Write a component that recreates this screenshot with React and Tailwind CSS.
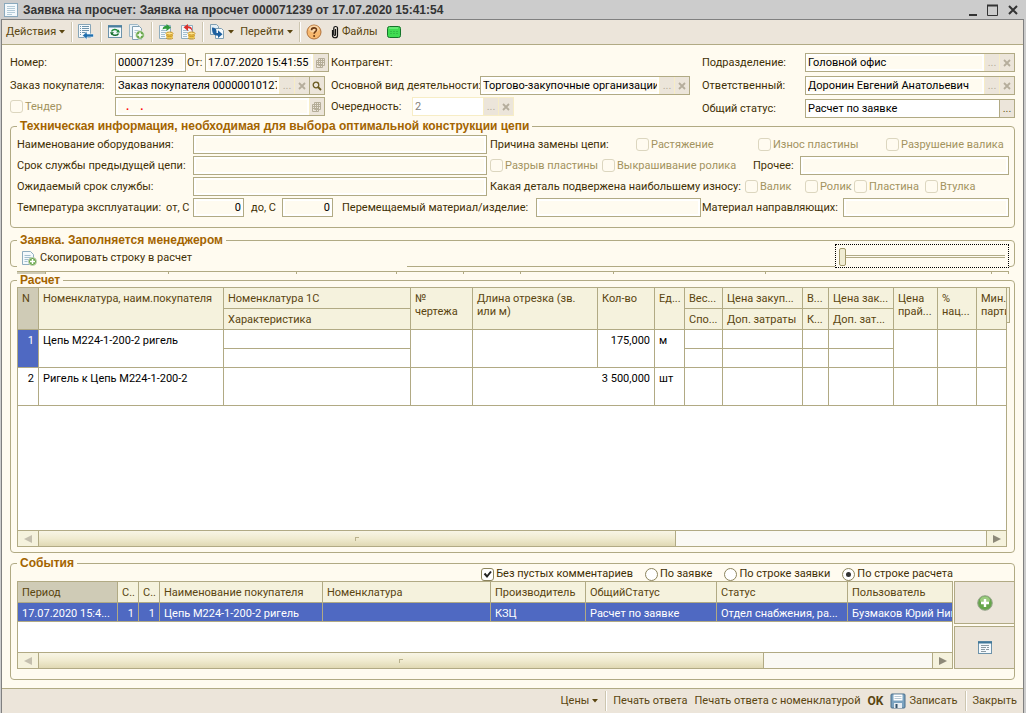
import { useState } from 'react';
import clsx from 'clsx';

// ── icons ──

function Sheet({ className = 'size-4' }) {
  return (
    <svg className={className} viewBox="0 0 16 16" fill="none">
      <rect x="1.5" y="1.5" width="13" height="13" fill="#f4f9fc" stroke="#8aa9bd" />
      <path d="M4 4.5h8M4 6.5h8M4 8.5h8M4 10.5h8M4 12.5h5" stroke="#b4cbd8" />
    </svg>
  );
}

function ListBackIcon() {
  return (
    <svg className="size-4" viewBox="0 0 16 16" fill="none">
      <path d="M.5.5h12v13H.5z" fill="#f4f9fc" stroke="#86a5b8" />
      <path d="M2 2.500h1M4 2.500h7M2 4.500h1M4 4.500h7M2 6.500h1M4 6.500h7M2 8.500h1M4 8.500h4M2 10.500h1" stroke="#6d93ab" />
      <path d="M4.500 11.500L9 7.500v2.500h6.500v3H9v2.500z" fill="#1f6fae" stroke="#f4f9fc" strokeWidth=".6" />
    </svg>
  );
}

function RefreshIcon() {
  return (
    <svg className="size-4" viewBox="0 0 16 16" fill="none">
      <rect x="1.500" y="1.500" width="13" height="12" fill="#f4f9fc" stroke="#6d93ab" />
      <path d="M1 2.500h14" stroke="#4a7f9f" strokeWidth="2" />
      <path d="M4.500 7.500c1-2.500 5-2.800 6.300-.6" stroke="#1f8a3a" strokeWidth="1.500" />
      <path d="M9 8.500h4l-1.500-3z" fill="#1f8a3a" />
      <path d="M11.500 9.500c-1 2.300-5 2.500-6.300.3" stroke="#146c2c" strokeWidth="1.500" />
      <path d="M7 8.300H3l1.500 3z" fill="#146c2c" />
    </svg>
  );
}

function CopyAddIcon() {
  return (
    <svg className="size-4" viewBox="0 0 16 16" fill="none">
      <path d="M.5.5h8l2 2v10H.5z" fill="#e8f1f6" stroke="#9db8c7" />
      <path d="M3.500 2.500h7l2 2v11h-9z" fill="#f8fbfd" stroke="#7f9fb2" />
      <path d="M5.500 6.500h5M5.500 8.500h3" stroke="#b4cbd8" />
      <circle cx="11" cy="11" r="4.300" fill="#6aa84a" stroke="#dfe8d8" />
      <path d="M11 8.500v5M8.500 11h5" stroke="#fff" strokeWidth="1.600" />
    </svg>
  );
}

function SheetAddIcon() {
  return (
    <svg className="size-4" viewBox="0 0 16 16" fill="none">
      <path d="M1.500 1.500h8l3 3v10h-11z" fill="#f4f9fc" stroke="#8fadbf" />
      <path d="M3.500 5.500h6M3.500 7.500h7M3.500 9.500h4M3.500 11.500h3" stroke="#a4bfce" />
      <circle cx="11.500" cy="11.500" r="4" fill="#6aa84a" stroke="#c5d3bb" />
      <path d="M11.500 9v5M9 11.500h5" stroke="#fff" strokeWidth="1.500" />
    </svg>
  );
}

function PostIcon({ undo }) {
  return (
    <svg className="size-4" viewBox="0 0 16 16" fill="none">
      <path d="M1.500 1.500h11v13h-11z" fill="#f4f9fc" stroke="#8fadbf" />
      <path d="M3 6.500h6M3 8.500h5M3 10.500h4M3 12.500h4" stroke="#a4bfce" />
      {undo ? (
        <path d="M12 8.500c0-3-1.500-4-4-4.200V7L3.500 3.300 8 0v2.300c3 0 5 2 4 6.200z" fill="#d9302c" />
      ) : (
        <path d="M4.500 5.500C5 2.500 6.500 1.800 8.500 1.800V0L13 3.500 8.500 7V4.800C7 4.500 5.500 4.500 4.500 5.500z" fill="#2e9a3c" />
      )}
      <path d="M8.500 9.500h6v5h-6z" fill="#f0c94a" />
      <ellipse cx="11.500" cy="9.500" rx="3.500" ry="1.500" fill="#ffe58a" stroke="#c9952a" />
      <path d="M8 11.500c1 1.300 6 1.300 7 0M8 14c1 1.500 6 1.500 7 0" stroke="#c9952a" />
    </svg>
  );
}

function BasedOnIcon() {
  return (
    <svg className="size-4" viewBox="0 0 16 16" fill="none">
      <path d="M1.500.5h6l2 2v8h-8z" fill="#e4eff5" stroke="#7f9fb2" />
      <path d="M6.500 4.500h6l2 2v8h-8z" fill="#f4f9fc" stroke="#7f9fb2" />
      <path d="M3 3.500c3 0 4.500 1.500 4.500 4V9H9V6.300l4.500 4L9 14v-2.300C4.500 11.500 3 9.500 3 3.500z" fill="#1c5f9e" />
    </svg>
  );
}

function HelpIcon() {
  return (
    <svg className="size-4" viewBox="0 0 16 16" fill="none">
      <circle cx="8" cy="8" r="7" fill="#f7b86e" stroke="#b0713a" />
      <ellipse cx="8" cy="5" rx="5" ry="3.500" fill="#fbd6a6" />
      <path d="M5.500 6.300C5.500 3 10.700 3.200 10.500 6c-.1 1.500-2.300 1.800-2.400 3.700" stroke="#6b3a14" strokeWidth="1.600" />
      <circle cx="8.100" cy="12" r="1" fill="#6b3a14" />
    </svg>
  );
}

function ClipIcon() {
  return (
    <svg className="h-4 w-2" viewBox="0 0 8 16" fill="none">
      <path d="M4.500 5v5.500c0 1.200-1.700 1.200-1.700 0V4C2.800 2 6.500 2 6.500 4v7.500c0 3-5 3-5 0V6" stroke="#111" strokeWidth="1.200" />
    </svg>
  );
}

function GreenIcon() {
  return (
    <svg className="h-3 w-3.5" viewBox="0 0 14 12" fill="none">
      <rect x=".5" y=".5" width="13" height="11" rx="2" fill="#3fdc52" stroke="#15742a" />
      <path d="M2 2h9" stroke="#8df598" />
      <path d="M3 5.500h8M3 7.500h8" stroke="#31bd45" strokeDasharray="2 1" />
    </svg>
  );
}

function PlusCircleIcon() {
  return (
    <svg className="size-4" viewBox="0 0 16 16" fill="none">
      <circle cx="8" cy="8" r="7.300" fill="#67a64c" stroke="#9aa590" />
      <ellipse cx="8" cy="5" rx="5" ry="3.500" fill="#9ccb80" />
      <path d="M8 4v8M4 8h8" stroke="#fff" strokeWidth="2.400" />
    </svg>
  );
}

function FormIcon() {
  return (
    <svg className="size-4" viewBox="0 0 16 16" fill="none">
      <rect x="1.500" y="1.500" width="13" height="12" fill="#f4f9fc" stroke="#6d93ab" />
      <path d="M1 2.500h14" stroke="#3f7799" strokeWidth="2" />
      <path d="M4 5.500h8M4 7.500h5M10 7.500h2M4 9.500h4M9 9.500h3M4 11.500h5" stroke="#8b9aa3" />
    </svg>
  );
}

function DiskIcon() {
  return (
    <svg className="size-4" viewBox="0 0 16 16" fill="none">
      <rect x="1" y="1" width="14" height="14" rx="1" fill="#7ba3c0" stroke="#4b6f8b" />
      <path d="M3.500 1.500h9v6h-9z" fill="#fff" />
      <path d="M4.500 3.500h7M4.500 5.500h7" stroke="#b7c8d4" />
      <path d="M4 10h8v5H4z" fill="#e6edf2" />
      <path d="M5.500 11h2v4h-2z" fill="#34526a" />
    </svg>
  );
}

function CalendarIcon() {
  return (
    <svg className="size-2.5" viewBox="0 0 10 10" fill="none">
      <path d="M2.500.5h6v7h-6zM.5 2.500h8M.5 4.500h8M.5 6.500h6M4.500.5v9M6.500.5v9M.5 2.500v7h6" stroke="#b5ad98" />
    </svg>
  );
}

function SearchIcon() {
  return (
    <svg className="size-2.5" viewBox="0 0 10 10" fill="none">
      <circle cx="4" cy="4" r="2.800" stroke="#6b5a20" strokeWidth="1.300" />
      <path d="M6 6l3 3" stroke="#6b5a20" strokeWidth="1.800" />
    </svg>
  );
}

function CrossIcon() {
  return (
    <svg className="size-2" viewBox="0 0 8 8" fill="none">
      <path d="M1 1l6 6M7 1L1 7" stroke="currentColor" strokeWidth="1.800" />
    </svg>
  );
}

function Caret() {
  return (
    <svg className="h-1 w-1.5" viewBox="0 0 6 4">
      <path d="M0 0h6L3 3.500z" fill="#5a4510" />
    </svg>
  );
}

// ── controls ──

const ADDONS = {
  dots: { label: 'Выбрать', icon: <span className="leading-3">...</span> },
  clear: { label: 'Очистить', icon: <CrossIcon /> },
  date: { label: 'Календарь', icon: <CalendarIcon /> },
  find: { label: 'Открыть', icon: <SearchIcon /> },
};

function Field({ id, label, value = '', addons = [], className, tone = 'plain', align }) {
  return (
    <div
      className={clsx(
        'flex h-[19px] shrink-0 border',
        tone === 'pale' ? 'border-[#f7edc6]' : 'border-[#b1aa84]',
        className,
      )}
    >
      <input
        id={id}
        aria-label={label}
        defaultValue={value}
        className={clsx(
          'min-w-0 flex-1 outline-none',
          tone === 'red' ? 'pl-2.5' : 'px-0.5',
          tone === 'plain' && 'bg-[#fffbf0] text-black shadow-[inset_0_0_0_2px_#fff]',
          tone === 'white' && 'bg-white text-black',
          tone === 'pale' && 'bg-white text-[#85817a]',
          tone === 'red' && 'bg-[#fffbf0] font-bold text-[#ff0000] shadow-[inset_0_0_0_2px_#fff]',
          align === 'right' && 'text-right',
        )}
      />
      {addons.map((a) => (
        <button
          key={a}
          type="button"
          aria-label={ADDONS[a].label}
          className={clsx(
            'flex w-[15px] shrink-0 items-center justify-center border-l bg-[#ece5da]',
            a === 'find' || tone === 'white'
              ? 'border-[#b1aa84] text-[#6b5a20]'
              : 'border-[#f7edc6] text-[#b5ad9c]',
          )}
        >
          {ADDONS[a].icon}
        </button>
      ))}
    </div>
  );
}

function Check({ label, className, checked = false }) {
  return (
    <label
      className={clsx(
        'flex shrink-0 items-center gap-0.5 whitespace-nowrap',
        checked ? 'text-[#3f3005]' : 'text-[#a3935f]',
        className,
      )}
    >
      <span className="relative flex size-[13px] shrink-0">
        <input
          type="checkbox"
          defaultChecked={checked}
          className={clsx(
            'peer size-[13px] appearance-none rounded-[3px] border',
            checked ? 'border-[#8c845c] bg-white' : 'border-[#dcd6bf] bg-[#fffbf0]',
          )}
        />
        <svg
          className="pointer-events-none absolute inset-0 hidden size-[13px] peer-checked:block"
          viewBox="0 0 13 13"
          fill="none"
        >
          <path d="M3.500 5.500l2.500 3 4-5" stroke="#222" strokeWidth="2" />
        </svg>
      </span>
      {label}
    </label>
  );
}

function Radio({ label, value, current, onChange }) {
  return (
    <label className="flex items-center gap-0.5 whitespace-nowrap text-[#3f3005]">
      <span className="relative flex size-[13px]">
        <input
          type="radio"
          name="scope"
          value={value}
          checked={current === value}
          onChange={() => onChange(value)}
          className="peer size-[13px] appearance-none rounded-full border border-[#8c845c] bg-white"
        />
        <span className="pointer-events-none absolute inset-1 hidden rounded-full bg-[#333] peer-checked:block" />
      </span>
      {label}
    </label>
  );
}

function Group({ title, className, children }) {
  return (
    <fieldset className={clsx('min-w-0 rounded border border-[#b1aa84] pl-1.5', className)}>
      <legend className="px-[3px] font-['Liberation_Sans',sans-serif] text-[12px] leading-3 font-bold text-[#a36400]">
        {title}
      </legend>
      {children}
    </fieldset>
  );
}

function ToolButton({ icon, label, menu, bold, className }) {
  return (
    <button
      type="button"
      aria-label={label ? undefined : 'Команда'}
      className={clsx(
        'flex h-5 shrink-0 items-center gap-[3px] whitespace-nowrap',
        bold && 'text-[12px] font-bold',
        className,
      )}
    >
      {icon}
      {label}
      {menu && <Caret />}
    </button>
  );
}

function Separator() {
  return <span className="h-5 w-px shrink-0 bg-[#cdc6b0] shadow-[1px_0_0_#fff]" />;
}

function ScrollBar({ thumb }) {
  const button = 'flex w-5 shrink-0 items-center justify-center bg-[#f5f2dd]';
  return (
    <div className="flex h-4 shrink-0 border-t border-[#b1aa84] bg-[#faf9f4]">
      <button type="button" aria-label="Влево" className={button}>
        <svg className="size-2" viewBox="0 0 8 8">
          <path d="M8 0v8L0 4z" fill="#c4bfae" />
        </svg>
      </button>
      <div className="flex flex-1">
        <div
          className="flex items-center justify-center border-x border-[#b1aa84] bg-linear-to-b from-[#f8f5e6] via-[#f0ebd0] to-[#e0d9b4]"
          style={{ width: thumb }}
        >
          <span className="size-1 border-t border-l border-[#b9b18c]" />
        </div>
      </div>
      <button type="button" aria-label="Вправо" className={clsx(button, 'border-l border-[#b1aa84]')}>
        <svg className="size-2" viewBox="0 0 8 8">
          <path d="M0 0v8l8-4z" fill="#8d8978" />
        </svg>
      </button>
    </div>
  );
}

// ── tables ──

const TH = 'border-r border-b border-[#b1aa84] px-1 pt-1 text-left align-top font-normal text-[#5a4510] overflow-hidden whitespace-nowrap';
const TD = 'border-r border-b border-[#b1aa84] px-1 align-top overflow-hidden whitespace-nowrap';

function CalcTable() {
  return (
    <table className="w-full table-fixed border-separate border-spacing-0 leading-[13px]">
      <colgroup>
        <col className="w-[21px]" />
        <col />
        <col className="w-[187px]" />
        <col className="w-[62px]" />
        <col className="w-[125px]" />
        <col className="w-[57px]" />
        <col className="w-[30px]" />
        <col className="w-[38px]" />
        <col className="w-[80px]" />
        <col className="w-[26px]" />
        <col className="w-[65px]" />
        <col className="w-[44px]" />
        <col className="w-[39px]" />
        <col className="w-[29px]" />
      </colgroup>
      <thead className="bg-[#f5f2dd]">
        <tr className="h-[21px]">
          <th rowSpan={2} className={clsx(TH, 'bg-[#cfcbb6]')}>N</th>
          <th rowSpan={2} className={TH}>Номенклатура, наим.покупателя</th>
          <th className={TH}>Номенклатура 1С</th>
          <th rowSpan={2} className={TH}>№<br />чертежа</th>
          <th rowSpan={2} className={TH}>Длина отрезка (зв.<br />или м)</th>
          <th rowSpan={2} className={TH}>Кол-во</th>
          <th rowSpan={2} className={TH}>Ед...</th>
          <th className={TH}>Вес...</th>
          <th className={TH}>Цена закуп...</th>
          <th className={TH}>В...</th>
          <th className={TH}>Цена зак...</th>
          <th rowSpan={2} className={TH}>Цена<br />прай...</th>
          <th rowSpan={2} className={TH}>%<br />нац...</th>
          <th rowSpan={2} className={clsx(TH, 'border-r-0 pr-0')}>Мин.<br />парти</th>
        </tr>
        <tr className="h-[21px]">
          <th className={TH}>Характеристика</th>
          <th className={TH}>Спо...</th>
          <th className={TH}>Доп. затраты</th>
          <th className={TH}>К...</th>
          <th className={TH}>Доп. зат...</th>
        </tr>
      </thead>
      <tbody className="text-black">
        <tr className="h-[19px]">
          <td rowSpan={2} className={clsx(TD, 'bg-[#4f69c2] pt-1 text-right text-white')}>1</td>
          <td rowSpan={2} className={clsx(TD, 'pt-1')}>Цепь М224-1-200-2 ригель</td>
          <td className={TD} />
          <td rowSpan={2} className={TD} />
          <td rowSpan={2} className={TD} />
          <td rowSpan={2} className={clsx(TD, 'pt-1 text-right')}>175,000</td>
          <td rowSpan={2} className={clsx(TD, 'pt-1')}>м</td>
          <td className={TD} />
          <td className={TD} />
          <td className={TD} />
          <td className={TD} />
          <td rowSpan={2} className={TD} />
          <td rowSpan={2} className={TD} />
          <td rowSpan={2} className={clsx(TD, 'border-r-0')} />
        </tr>
        <tr className="h-[19px]">
          <td className={TD} />
          <td className={TD} />
          <td className={TD} />
          <td className={TD} />
          <td className={TD} />
        </tr>
        <tr className="h-[38px]">
          <td className={clsx(TD, 'pt-1 text-right')}>2</td>
          <td className={clsx(TD, 'pt-1')}>Ригель к Цепь М224-1-200-2</td>
          <td className={TD} />
          <td className={TD} />
          <td colSpan={2} className={clsx(TD, 'pt-1 text-right')}>3 500,000</td>
          <td className={clsx(TD, 'pt-1')}>шт</td>
          <td className={TD} />
          <td className={TD} />
          <td className={TD} />
          <td className={TD} />
          <td className={TD} />
          <td className={TD} />
          <td className={clsx(TD, 'border-r-0')} />
        </tr>
      </tbody>
    </table>
  );
}

const EVENT_COLUMNS = [
  { title: 'Период', value: '17.07.2020 15:4...', width: 'w-[100px]' },
  { title: 'С..', value: '1', width: 'w-[21px]', right: true },
  { title: 'С..', value: '1', width: 'w-[21px]', right: true },
  { title: 'Наименование покупателя', value: 'Цепь М224-1-200-2 ригель', width: 'w-[163px]' },
  { title: 'Номенклатура', value: '', width: '' },
  { title: 'Производитель', value: 'КЗЦ', width: 'w-[95px]' },
  { title: 'ОбщийСтатус', value: 'Расчет по заявке', width: 'w-[131px]' },
  { title: 'Статус', value: 'Отдел снабжения, ра...', width: 'w-[131px]' },
  { title: 'Пользователь', value: 'Бузмаков Юрий Ник', width: 'w-[104px]' },
];

function EventsTable() {
  return (
    <table className="w-full table-fixed border-separate border-spacing-0 leading-[13px]">
      <colgroup>
        {EVENT_COLUMNS.map((c, i) => (
          <col key={i} className={c.width} />
        ))}
      </colgroup>
      <thead className="bg-[#f5f2dd]">
        <tr className="h-[21px]">
          {EVENT_COLUMNS.map((c, i) => (
            <th key={i} className={clsx(TH, 'last:border-r-0', i === 0 && 'bg-[#cfcbb6]')}>
              {c.title}
            </th>
          ))}
        </tr>
      </thead>
      <tbody>
        <tr className="h-[19px] bg-[#4f69c2] text-white">
          {EVENT_COLUMNS.map((c, i) => (
            <td key={i} className={clsx(TD, 'pt-1 last:border-r-0 last:pr-0', c.right && 'text-right')}>
              {c.value}
            </td>
          ))}
        </tr>
      </tbody>
    </table>
  );
}

// ── page ──

export default function App() {
  const [scope, setScope] = useState('calc');
  const label = 'shrink-0 whitespace-nowrap';

  return (
    <div className="flex min-h-screen flex-col bg-[#cccccc] font-['Roboto',sans-serif] text-[11px] leading-4 text-[#3f3005]">
      {/* title bar */}
      <header className="flex h-[19px] shrink-0 items-center gap-1 pr-2 pl-[3px]">
        <Sheet />
        <h1 className="flex-1 text-[12px] font-bold whitespace-nowrap text-[#333] font-['Liberation_Sans',sans-serif]">
          Заявка на просчет: Заявка на просчет 000071239 от 17.07.2020 15:41:54
        </h1>
        <div className="flex items-center gap-2.5">
          <button type="button" aria-label="Свернуть">
            <svg className="h-3 w-2" viewBox="0 0 8 12"><path d="M0 10h8v2H0z" fill="#333" /></svg>
          </button>
          <button type="button" aria-label="Развернуть">
            <svg className="h-3 w-[11px]" viewBox="0 0 11 12" fill="none">
              <path d="M.5 1v10.500h10V1" stroke="#333" />
              <path d="M0 1.500h11" stroke="#333" strokeWidth="2" />
            </svg>
          </button>
          <button type="button" aria-label="Закрыть окно">
            <svg className="size-2.5" viewBox="0 0 10 10" fill="none">
              <path d="M1 1l8 8M9 1L1 9" stroke="#333" strokeWidth="2" />
            </svg>
          </button>
        </div>
      </header>

      <div className="mr-[2px] ml-px flex flex-1 flex-col border-x border-t border-[#808080] bg-[#fffbf0]">
        {/* command bar */}
        <div className="flex h-[25px] shrink-0 items-center gap-1.5 border-b border-[#b1aa84] bg-[#ece5da] px-1 text-[#5a4510]">
          <ToolButton label="Действия" menu />
          <Separator />
          <ToolButton icon={<ListBackIcon />} />
          <Separator />
          <ToolButton icon={<RefreshIcon />} />
          <ToolButton icon={<CopyAddIcon />} />
          <Separator />
          <ToolButton icon={<PostIcon />} />
          <ToolButton icon={<PostIcon undo />} />
          <Separator />
          <ToolButton icon={<BasedOnIcon />} menu />
          <ToolButton label="Перейти" menu />
          <Separator />
          <ToolButton icon={<HelpIcon />} />
          <ToolButton icon={<ClipIcon />} label="Файлы" className="px-[3px]" />
          <ToolButton icon={<GreenIcon />} />
        </div>

        <main className="flex flex-1 flex-col p-2">
          {/* document header */}
          <div className="flex shrink-0 leading-[19px]">
            <div className="grid w-[321px] shrink-0 grid-rows-[23px_21px_19px]">
              <div className="flex">
                <label htmlFor="number" className={clsx(label, 'w-[105px]')}>Номер:</label>
                <Field id="number" value="000071239" className="w-[71px]" />
                <label htmlFor="date" className={clsx(label, 'w-[19px] pl-px')}>От:</label>
                <Field id="date" value="17.07.2020 15:41:55" addons={['date']} className="w-[124px]" />
              </div>
              <div className="flex">
                <label htmlFor="order" className={clsx(label, 'w-[105px]')}>Заказ покупателя:</label>
                <Field
                  id="order"
                  value="Заказ покупателя 00000010127"
                  addons={['dots', 'clear', 'find']}
                  className="w-[210px]"
                />
              </div>
              <div className="flex">
                <Check label="Тендер" className="w-[105px]" />
                <Field label="Дата тендера" value=".    ." tone="red" addons={['date']} className="w-[210px]" />
              </div>
            </div>

            <div className="grid w-[371px] shrink-0 grid-rows-[23px_21px_19px]">
              <span className={label}>Контрагент:</span>
              <div className="flex">
                <label htmlFor="activity" className={clsx(label, 'w-[149px]')}>Основной вид деятельности:</label>
                <Field
                  id="activity"
                  value="Торгово-закупочные организации"
                  addons={['dots', 'clear']}
                  className="w-[210px]"
                />
              </div>
              <div className="flex">
                <label htmlFor="queue" className={clsx(label, 'w-[81px]')}>Очередность:</label>
                <Field id="queue" value="2" tone="pale" addons={['dots', 'clear']} className="w-[102px]" />
              </div>
            </div>

            <div className="grid flex-1 grid-rows-[23px_23px_19px]">
              <div className="flex">
                <label htmlFor="division" className={clsx(label, 'w-[103px]')}>Подразделение:</label>
                <Field id="division" value="Головной офис" addons={['dots', 'clear']} className="flex-1" />
              </div>
              <div className="flex">
                <label htmlFor="owner" className={clsx(label, 'w-[103px]')}>Ответственный:</label>
                <Field id="owner" value="Доронин Евгений Анатольевич" addons={['dots', 'clear']} className="flex-1" />
              </div>
              <div className="flex">
                <label htmlFor="status" className={clsx(label, 'w-[103px]')}>Общий статус:</label>
                <Field id="status" value="Расчет по заявке" tone="white" addons={['dots']} className="flex-1" />
              </div>
            </div>
          </div>

          {/* technical details */}
          <Group
            title="Техническая информация, необходимая для выбора оптимальной конструкции цепи"
            className="mt-0.5 shrink-0 pr-[5px]"
          >
            <div className="mt-[3px] mb-2.5 flex flex-col gap-0.5">
              <div className="flex items-center">
                <label htmlFor="equipment" className={clsx(label, 'w-[176px]')}>Наименование оборудования:</label>
                <Field id="equipment" className="w-[294px]" />
                <span className={clsx(label, 'w-[149px] pl-[3px]')}>Причина замены цепи:</span>
                <Check label="Растяжение" className="w-[122px]" />
                <Check label="Износ пластины" className="w-[128px]" />
                <Check label="Разрушение валика" />
              </div>
              <div className="flex items-center">
                <label htmlFor="previous" className={clsx(label, 'w-[176px]')}>Срок службы предыдущей цепи:</label>
                <Field id="previous" className="w-[294px]" />
                <Check label="Разрыв пластины" className="w-[115px] pl-[3px]" />
                <Check label="Выкрашивание ролика" className="w-[151px]" />
                <label htmlFor="other" className={clsx(label, 'w-[47px]')}>Прочее:</label>
                <Field id="other" className="flex-1" />
              </div>
              <div className="flex items-center">
                <label htmlFor="expected" className={clsx(label, 'w-[176px]')}>Ожидаемый срок службы:</label>
                <Field id="expected" className="w-[294px]" />
                <span className={clsx(label, 'w-[258px] pl-[3px]')}>Какая деталь подвержена наибольшему износу:</span>
                <Check label="Валик" className="w-[60px]" />
                <Check label="Ролик" className="w-[49px]" />
                <Check label="Пластина" className="w-[71px]" />
                <Check label="Втулка" />
              </div>
              <div className="flex items-center">
                <span className={clsx(label, 'w-[149px]')}>Температура эксплуатации:</span>
                <label htmlFor="from" className={clsx(label, 'w-[27px]')}>от, С</label>
                <Field id="from" value="0" align="right" className="w-[51px]" />
                <label htmlFor="to" className={clsx(label, 'w-[38px] pl-[7px]')}>до, С</label>
                <Field id="to" value="0" align="right" className="w-[51px]" />
                <label htmlFor="material" className={clsx(label, 'w-[203px] pl-[9px]')}>
                  Перемещаемый материал/изделие:
                </label>
                <Field id="material" className="w-[165px]" />
                <label htmlFor="guides" className={clsx(label, 'w-[142px] pl-px')}>Материал направляющих:</label>
                <Field id="guides" className="flex-1" />
              </div>
            </div>
          </Group>

          {/* manager's request */}
          <Group title="Заявка. Заполняется менеджером" className="mt-1.5 h-[33px] shrink-0 pr-[5px]">
            <div className="flex h-6 justify-between">
              <div className="flex h-6 w-[390px] items-center bg-[#fffbf0] pl-1">
                <ToolButton icon={<SheetAddIcon />} label="Скопировать строку в расчет" />
              </div>
              <input
                type="range"
                aria-label="Положение"
                defaultValue="0"
                className="relative -mt-0.5 h-6 w-[174px] appearance-none border border-dotted border-black bg-[#fffbf0] px-[3px] outline-none [&::-webkit-slider-runnable-track]:h-[3px] [&::-webkit-slider-runnable-track]:border-y [&::-webkit-slider-runnable-track]:border-[#b1aa84] [&::-webkit-slider-thumb]:-mt-2 [&::-webkit-slider-thumb]:h-[18px] [&::-webkit-slider-thumb]:w-[7px] [&::-webkit-slider-thumb]:appearance-none [&::-webkit-slider-thumb]:rounded-xs [&::-webkit-slider-thumb]:border [&::-webkit-slider-thumb]:border-[#a39a6c] [&::-webkit-slider-thumb]:bg-[#f0ecd2]"
              />
            </div>
          </Group>

          {/* collapsed list edge */}
          <div className="mt-1 mr-1.5 ml-[7px] flex h-[3px] shrink-0 border-t border-r border-[#b1aa84]">
            <span className="w-[29px] border-r border-[#b1aa84] bg-[#cfcbb6]" />
            <span className="w-[123px] border-r border-[#b1aa84]" />
            <span className="w-[128px] border-r border-[#b1aa84]" />
            <span className="w-[100px] border-r border-[#b1aa84]" />
            <span className="w-[67px] border-r border-[#b1aa84]" />
            <span className="w-[57px] border-r border-[#b1aa84]" />
            <span className="w-[93px] border-r border-[#b1aa84]" />
            <span className="w-[152px] border-r border-[#b1aa84]" />
            <span className="flex-1 border-r border-[#b1aa84]" />
            <span className="w-4" />
          </div>

          {/* calculation */}
          <Group title="Расчет" className="flex-1 pr-1">
            <div className="mt-px mb-[5px] flex min-h-[260px]">
              <div className="flex min-w-0 flex-1 flex-col border border-[#b1aa84] bg-white">
                <div className="flex-1">
                  <CalcTable />
                </div>
                <ScrollBar thumb={638} />
              </div>
              <div className="flex h-9 w-[3px] flex-col border-y border-r border-[#b1aa84] bg-[#f5f2dd]" />
            </div>
          </Group>

          {/* events */}
          <Group title="События" className="mt-1 shrink-0">
            <div className="-mt-0.5 mr-[61px] flex h-3.5 items-center justify-end gap-3">
              <Check label="Без пустых комментариев" checked />
              <Radio label="По заявке" value="request" current={scope} onChange={setScope} />
              <Radio label="По строке заявки" value="line" current={scope} onChange={setScope} />
              <Radio label="По строке расчета" value="calc" current={scope} onChange={setScope} />
            </div>
            <div className="-mr-px mb-2.5 flex h-[88px] gap-px">
              <div className="flex min-w-0 flex-1 flex-col border border-[#b1aa84] bg-white">
                <div className="flex-1">
                  <EventsTable />
                </div>
                <ScrollBar thumb={726} />
              </div>
              <div className="flex w-[61px] flex-col gap-0.5">
                <button
                  type="button"
                  aria-label="Добавить"
                  className="flex flex-1 items-center justify-center border border-[#b1aa84] bg-[#ece5da]"
                >
                  <PlusCircleIcon />
                </button>
                <button
                  type="button"
                  aria-label="Открыть форму"
                  className="flex flex-1 items-center justify-center border border-[#b1aa84] bg-[#ece5da]"
                >
                  <FormIcon />
                </button>
              </div>
            </div>
          </Group>
        </main>

        {/* bottom commands */}
        <footer className="flex h-[25px] shrink-0 items-center justify-end gap-[7px] border-t border-[#b1aa84] bg-[#ece5da] px-1.5 text-[#5a4510]">
          <ToolButton label="Цены" menu />
          <Separator />
          <ToolButton label="Печать ответа" />
          <ToolButton label="Печать ответа с номенклатурой" />
          <ToolButton label="OK" bold />
          <ToolButton icon={<DiskIcon />} label="Записать" />
          <Separator />
          <ToolButton label="Закрыть" />
        </footer>
      </div>
    </div>
  );
}
